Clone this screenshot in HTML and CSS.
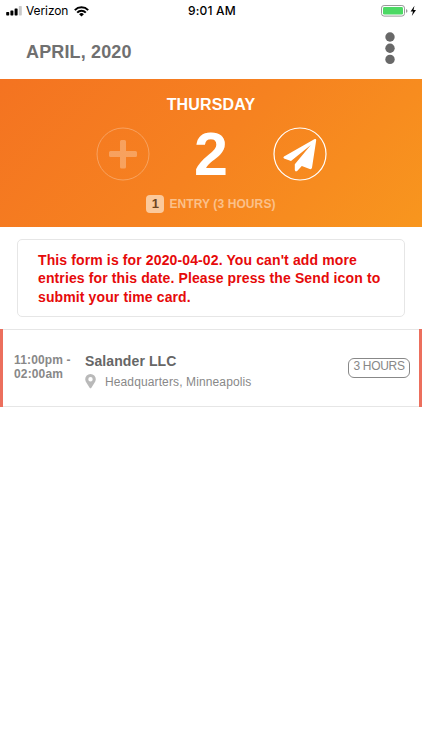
FILE: index.html
```
<!DOCTYPE html>
<html lang="en">
<head>
<meta charset="utf-8">
<title>Time card</title>
<link rel="stylesheet" href="styles.css">
</head>
<body>
<div class="status">
  <div class="carrier">
    <svg width="17" height="10" viewBox="0 0 17 10"><rect x="0.2" y="6" width="3" height="3.5" rx=".7"/><rect x="4.4" y="4.4" width="3" height="5.1" rx=".7"/><rect x="8.6" y="2.4" width="3" height="7.1" rx=".7"/><rect x="12.8" y="0" width="3" height="9.5" rx=".7" fill="#c8c8c8"/></svg>
    <span class="network">Verizon</span>
    <svg width="15" height="11" viewBox="0 0 15 11" fill="none" stroke="#000" stroke-width="2"><path d="M.8 4.1a9.5 9.5 0 0 1 13.4 0M3.2 6.6a6 6 0 0 1 8.6 0"/><path d="M7.5 10.6 5.1 8.2a3.4 3.4 0 0 1 4.8 0z" fill="#000" stroke="none"/></svg>
  </div>
  <span class="clock">9:01 AM</span>
  <div class="power">
    <svg width="36" height="12" viewBox="0 0 36 12"><rect x=".5" y=".5" width="23" height="10.6" rx="2.6" fill="#fff" stroke="#999"/><rect x="2" y="2" width="20" height="7.6" rx="1.4" fill="#4cd964"/><path d="M25 4v3.800q1.500-.5 1.500-1.900T25 4z" fill="#999"/><path d="M33.500.8 29.600 6.400h2.400l-1.200 4.500 4.200-6h-2.500z"/></svg>
  </div>
</div>
<header class="bar">
  <h1 class="month">APRIL, 2020</h1>
  <svg class="more" width="10" height="33" viewBox="0 0 10 33"><circle cx="5" cy="5" r="4.700"/><circle cx="5" cy="16.200" r="4.700"/><circle cx="5" cy="27.400" r="4.700"/></svg>
</header>
<section class="hero">
  <div class="weekday">THURSDAY</div>
  <div class="actions">
    <svg class="disabled" width="54" height="54" viewBox="0 0 54 54"><circle cx="27" cy="27" r="26" fill="none" stroke="#fff"/><path d="M25.500 13h3q1.500 0 1.500 1.500V24h9.500q1.500 0 1.500 1.500v3q0 1.500-1.500 1.500H30v10q0 1.500-1.500 1.500h-3Q24 41.500 24 40V30H14.500Q13 30 13 28.500v-3Q13 24 14.500 24H24v-9.500Q24 13 25.500 13z" fill="#fff"/></svg>
    <span class="day">2</span>
    <svg width="54" height="54" viewBox="0 0 54 54"><circle cx="27" cy="27" r="26" fill="none" stroke="#fff" stroke-width="1.200"/><path d="M41.700 12Q43.300 11.500 43.200 13.300L39 40.800Q38.500 42.600 36.700 42L28.800 39 24.200 44Q22.200 45.200 21.800 43V37.200L37.800 18 18 34 11 31.500Q9.700 30.500 11 29.500z" fill="#fff"/></svg>
  </div>
  <div class="summary"><span class="count">1</span><span class="entries">ENTRY (3 HOURS)</span></div>
</section>
<div class="notice">This form is for 2020-04-02. You can't add more<br>entries for this date. Please press the Send icon to<br>submit your time card.</div>
<article class="entry">
  <div class="time">11:00pm -<br>02:00am</div>
  <div class="details">
    <div class="client">Salander LLC</div>
    <div class="place"><svg width="11" height="15" viewBox="0 0 11 15"><path fill-rule="evenodd" d="M5.500 0A5.300 5.300 0 0 0 .2 5.300C.2 8 2.500 10 4.600 13.700q.9 1.300 1.800 0C8.500 10 10.800 8 10.800 5.300A5.300 5.300 0 0 0 5.500 0zM5.500 3.100a2.200 2.200 0 1 1 0 4.400 2.200 2.200 0 0 1 0-4.400z" fill="#b9b9b9"/></svg><span>Headquarters, Minneapolis</span></div>
  </div>
  <div class="duration">3 HOURS</div>
</article>
</body>
</html>
```
FILE: styles.css
```
* { box-sizing: border-box; }
body { margin: 0; width: 422px; height: 750px; overflow: hidden; background: #fff; font-family: "Liberation Sans", Arial, sans-serif; }
svg { display: block; flex: none; }
.status { display: grid; grid-template-columns: 1fr auto 1fr; align-items: center; height: 22px; padding: 0 5px 0 6px; font-family: Inter, sans-serif; }
.carrier { display: flex; align-items: center; }
.network { font-size: 12px; line-height: 16px; margin: 0 6px 0 3px; letter-spacing: -.1px; }
.clock { font-size: 12px; font-weight: 500; line-height: 16px; padding-left: 1px; letter-spacing: .2px; }
.power { display: flex; justify-content: flex-end; }
.bar { display: flex; justify-content: space-between; height: 57px; padding: 10px 27px 0 26px; }
.month { margin: 9px 0 0; font-size: 18px; line-height: 22px; color: #707070; letter-spacing: .15px; }
.more { fill: #686868; }
.hero { height: 148px; padding-top: 15px; color: #fff; background: linear-gradient(135deg, #f47321 0%, #f68220 50%, #f8961e 100%); }
.weekday { font-size: 16px; line-height: 22px; font-weight: bold; text-align: center; letter-spacing: .15px; }
.actions { display: flex; align-items: center; justify-content: center; margin-top: 11px; height: 54px; }
.day { width: 123px; text-align: center; font-size: 61px; line-height: 54px; font-weight: bold; }
.disabled { opacity: .28; }
.summary { display: flex; align-items: center; justify-content: center; gap: 5px; margin-top: 13px; }
.count { width: 18px; height: 18px; border-radius: 4px; background: #fbc99b; color: #70451f; font-size: 13px; line-height: 18px; text-align: center; font-weight: bold; }
.entries { color: #fbc08a; font-size: 12px; font-weight: bold; line-height: 20px; letter-spacing: .1px; }
.notice { margin: 12px 17px; height: 78px; padding: 11px 20px; border: 1px solid #e6e6e6; border-radius: 5px; color: #e60a0a; font-size: 14px; font-weight: bold; line-height: 18.300px; white-space: nowrap; letter-spacing: .12px; }
.entry { display: flex; height: 78px; box-shadow: inset 3px 0 #ec6f5d, inset -3px 0 #ec6f5d, inset 0 1px #e6e6e6, inset 0 -1px #e6e6e6; color: #888; padding: 0 3px 0 14px; }
.time { width: 71px; padding-top: 24px; font-size: 12px; line-height: 14px; font-weight: bold; letter-spacing: .15px; }
.details { flex: 1; padding-top: 23px; }
.client { font-size: 14px; line-height: 18px; font-weight: bold; color: #666; letter-spacing: .1px; }
.place { display: flex; gap: 9px; margin-top: 4px; font-size: 12px; line-height: 17px; letter-spacing: .12px; }
.duration { width: 62px; height: 20px; margin: 29px 9px 0 0; border: 1px solid #888; border-radius: 6px; font-size: 12px; line-height: 15px; text-align: center; white-space: nowrap; letter-spacing: -.3px; }
```
